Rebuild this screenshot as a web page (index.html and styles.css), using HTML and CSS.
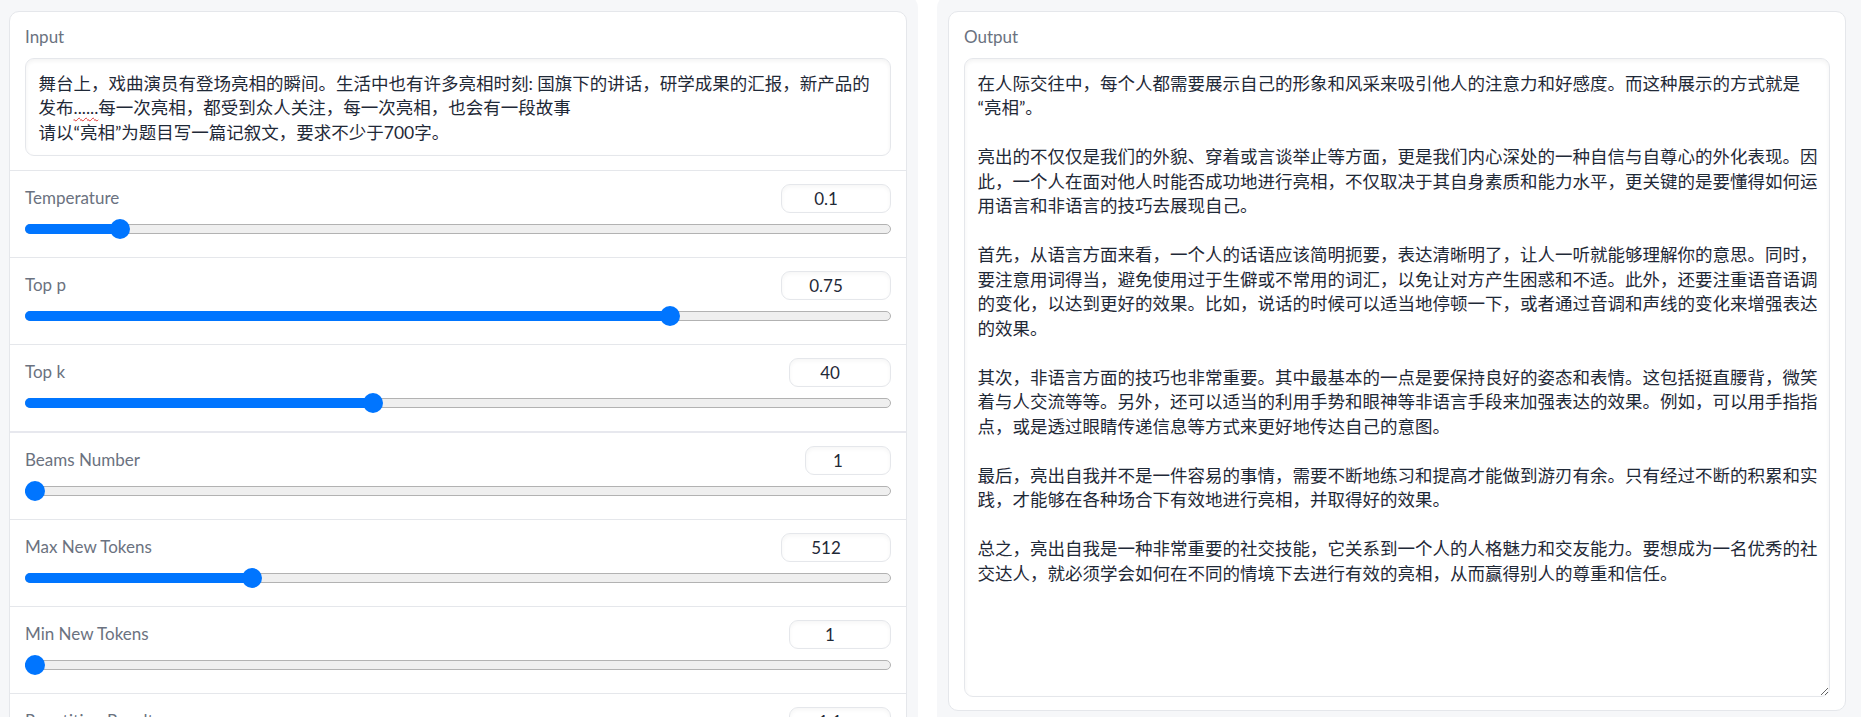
FILE: index.html
```html
<!DOCTYPE html>
<html lang="zh-CN">
<head>
  <meta charset="UTF-8">
  <meta name="viewport" content="width=device-width, initial-scale=1">
  <title>Essay Generator</title>
  <link rel="stylesheet" href="styles.css">
</head>
<body>
  <div class="app">
    <!-- Left column: prompt and generation settings -->
    <div class="column column-left">
      <div class="panel">
        <div class="block block-text">
          <span class="block-label">Input</span>
          <div class="textbox textbox-input">舞台上，戏曲演员有登场亮相的瞬间。生活中也有许多亮相时刻: 国旗下的讲话，研学成果的汇报，新产品的发布<span class="typo">......</span>每一次亮相，都受到众人关注，每一次亮相，也会有一段故事<br>请以“亮相”为题目写一篇记叙文，要求不少于700字。</div>
        </div>

        <div class="block slider-block">
          <div class="slider-head">
            <span class="block-label">Temperature</span>
            <input class="num num-wide" type="text" value="0.1">
          </div>
          <div class="slider" style="--v:0.1"><div class="track"></div><div class="fill"></div><div class="thumb"></div></div>
        </div>

        <div class="block slider-block">
          <div class="slider-head">
            <span class="block-label">Top p</span>
            <input class="num num-wide" type="text" value="0.75">
          </div>
          <div class="slider" style="--v:0.75"><div class="track"></div><div class="fill"></div><div class="thumb"></div></div>
        </div>

        <div class="block slider-block">
          <div class="slider-head">
            <span class="block-label">Top k</span>
            <input class="num num-mid" type="text" value="40">
          </div>
          <div class="slider" style="--v:0.4"><div class="track"></div><div class="fill"></div><div class="thumb"></div></div>
        </div>

        <div class="block slider-block group-start">
          <div class="slider-head">
            <span class="block-label">Beams Number</span>
            <input class="num num-narrow" type="text" value="1">
          </div>
          <div class="slider" style="--v:0"><div class="track"></div><div class="fill"></div><div class="thumb"></div></div>
        </div>

        <div class="block slider-block">
          <div class="slider-head">
            <span class="block-label">Max New Tokens</span>
            <input class="num num-wide" type="text" value="512">
          </div>
          <div class="slider" style="--v:0.256"><div class="track"></div><div class="fill"></div><div class="thumb"></div></div>
        </div>

        <div class="block slider-block">
          <div class="slider-head">
            <span class="block-label">Min New Tokens</span>
            <input class="num num-mid" type="text" value="1">
          </div>
          <div class="slider" style="--v:0"><div class="track"></div><div class="fill"></div><div class="thumb"></div></div>
        </div>

        <div class="block slider-block">
          <div class="slider-head">
            <span class="block-label">Repetition Penalty</span>
            <input class="num num-mid" type="text" value="1.1">
          </div>
          <div class="slider" style="--v:0.05"><div class="track"></div><div class="fill"></div><div class="thumb"></div></div>
        </div>
      </div>
    </div>

    <!-- Right column: generated essay -->
    <div class="column column-right">
      <div class="panel">
        <div class="block block-text">
          <span class="block-label">Output</span>
          <textarea class="textbox textbox-output" readonly>在人际交往中，每个人都需要展示自己的形象和风采来吸引他人的注意力和好感度。而这种展示的方式就是“亮相”。

亮出的不仅仅是我们的外貌、穿着或言谈举止等方面，更是我们内心深处的一种自信与自尊心的外化表现。因此，一个人在面对他人时能否成功地进行亮相，不仅取决于其自身素质和能力水平，更关键的是要懂得如何运用语言和非语言的技巧去展现自己。

首先，从语言方面来看，一个人的话语应该简明扼要，表达清晰明了，让人一听就能够理解你的意思。同时，要注意用词得当，避免使用过于生僻或不常用的词汇，以免让对方产生困惑和不适。此外，还要注重语音语调的变化，以达到更好的效果。比如，说话的时候可以适当地停顿一下，或者通过音调和声线的变化来增强表达的效果。

其次，非语言方面的技巧也非常重要。其中最基本的一点是要保持良好的姿态和表情。这包括挺直腰背，微笑着与人交流等等。另外，还可以适当的利用手势和眼神等非语言手段来加强表达的效果。例如，可以用手指指点，或是透过眼睛传递信息等方式来更好地传达自己的意图。

最后，亮出自我并不是一件容易的事情，需要不断地练习和提高才能做到游刃有余。只有经过不断的积累和实践，才能够在各种场合下有效地进行亮相，并取得好的效果。

总之，亮出自我是一种非常重要的社交技能，它关系到一个人的人格魅力和交友能力。要想成为一名优秀的社交达人，就必须学会如何在不同的情境下去进行有效的亮相，从而赢得别人的尊重和信任。</textarea>
        </div>
      </div>
    </div>
  </div>
</body>
</html>
```

FILE: styles.css
```css
/* Reset */
*, *::before, *::after { margin: 0; padding: 0; box-sizing: border-box; }
html, body {
  overflow: hidden;
  height: 100%;
}
body {
  background: #fff;
  font-family: 'Lato', 'Noto Sans CJK SC', sans-serif;
  color: #1f2937;
}

/* Two columns */
.app {
  display: flex;
  gap: 19px;
  width: 1875px;
  margin: -6px 0 0 -10px;
}
.column {
  flex: 1;
  height: 760px;
  background: #f6f7f9;
  border-radius: 14px;
}
.column-left { padding: 17px 11px 0 19px; }
.column-right { padding: 17px 19px 0 11px; }

/* Panel with stacked blocks */
.panel {
  background: #fff;
  border: 1px solid #e5e7eb;
  border-radius: 10px;
  overflow: hidden;
}
.block {
  padding: 12.5px 15px;
}
.block + .block {
  border-top: 1px solid #e5e7eb;
}
.block.group-start {
  border-top: 2px solid #e7e8ee;
}
.block-text {
  padding-bottom: 14px;
}
.block-label {
  display: block;
  font-size: 17px;
  line-height: 24.5px;
  color: #6b7280;
}
.block-text .block-label {
  margin-bottom: 9px;
}

/* Text areas */
.textbox {
  display: block;
  width: 100%;
  border: 1px solid #e5e7eb;
  border-radius: 9px;
  background: #fff;
  box-shadow: inset 0 2px 4px rgba(0, 0, 0, 0.05);
  padding: 12.5px 13.5px 10px 12.5px;
  font-family: 'Lato', 'Noto Sans CJK SC', sans-serif;
  font-size: 17.5px;
  line-height: 24.5px;
  color: #1f2937;
  outline: none;
}
.textbox-input {
  height: 98px;
}
.textbox-output {
  height: 639px;
  padding-right: 8px;
  resize: vertical;
}
.typo {
  text-decoration: underline wavy #e0322f;
  text-decoration-thickness: 1px;
  text-underline-offset: 3px;
}
.block-text .block-label + .textbox-output {
  margin-bottom: -1.5px;
}

/* Sliders */
.slider-block {
  padding-bottom: 18.5px;
}
.slider-head {
  display: flex;
  align-items: center;
  justify-content: space-between;
  height: 29px;
}
.num {
  height: 29px;
  border: 1px solid #e5e7eb;
  border-radius: 9px;
  background: #fff;
  box-shadow: inset 0 2px 4px rgba(0, 0, 0, 0.04);
  padding: 0 20px 0 0;
  text-align: center;
  font-family: 'Lato', sans-serif;
  font-size: 17px;
  color: #1f2937;
  outline: none;
}
.num-wide { width: 110px; }
.num-mid { width: 102px; }
.num-narrow { width: 86px; }

.slider {
  position: relative;
  height: 20px;
  margin-top: 6px;
}
.track {
  position: absolute;
  left: 0;
  right: 0;
  top: 5px;
  height: 10px;
  background: #efefef;
  border: 1px solid #b2b2b2;
  border-radius: 5px;
}
.fill {
  position: absolute;
  left: 0;
  top: 5px;
  height: 10px;
  width: calc(var(--v) * (100% - 20px) + 10px);
  background: #0075ff;
  border-radius: 5px 0 0 5px;
}
.thumb {
  position: absolute;
  top: 0;
  left: calc(var(--v) * (100% - 20px));
  width: 20px;
  height: 20px;
  border-radius: 50%;
  background: #0075ff;
}
```
